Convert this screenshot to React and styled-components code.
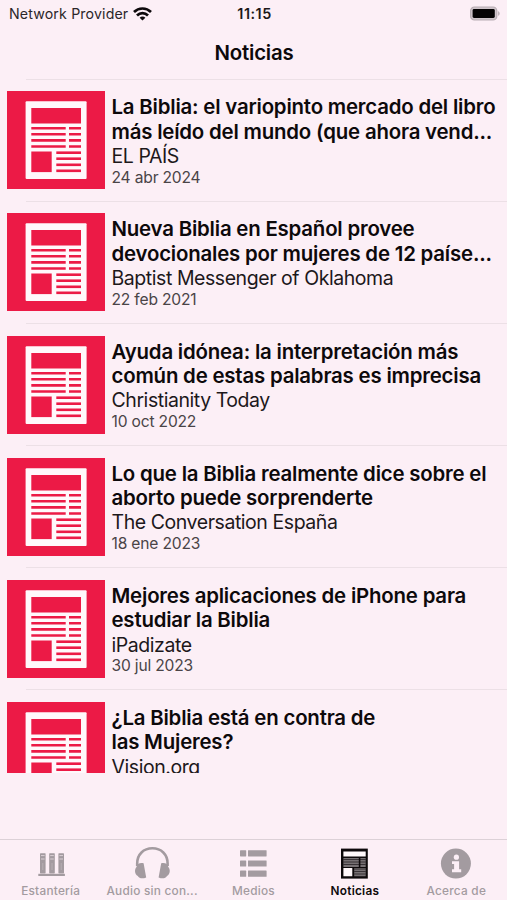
import React from 'react';
import styled, { createGlobalStyle } from 'styled-components';

const GlobalStyle = createGlobalStyle`
  * {
    box-sizing: border-box;
  }
  body {
    margin: 0;
    background-color: #fceff6;
    font-family: Inter, 'Liberation Sans', sans-serif;
    color: #0d090b;
  }
`;

const news = [
  {
    title: ['La Biblia: el variopinto mercado del libro', 'más leído del mundo (que ahora vend...'],
    source: 'EL PAÍS',
    date: '24 abr 2024',
  },
  {
    title: ['Nueva Biblia en Español provee', 'devocionales por mujeres de 12 paíse...'],
    source: 'Baptist Messenger of Oklahoma',
    date: '22 feb 2021',
  },
  {
    title: ['Ayuda idónea: la interpretación más', 'común de estas palabras es imprecisa'],
    source: 'Christianity Today',
    date: '10 oct 2022',
  },
  {
    title: ['Lo que la Biblia realmente dice sobre el', 'aborto puede sorprenderte'],
    source: 'The Conversation España',
    date: '18 ene 2023',
  },
  {
    title: ['Mejores aplicaciones de iPhone para', 'estudiar la Biblia'],
    source: 'iPadizate',
    date: '30 jul 2023',
  },
  {
    title: ['¿La Biblia está en contra de', 'las Mujeres?'],
    source: 'Vision.org',
    date: '',
  },
];

const Screen = styled.div`
  display: flex;
  flex-direction: column;
  width: 507px;
  height: 900px;
  overflow: hidden;
  background-color: #fceff6;
`;

const StatusBar = styled.div`
  display: grid;
  grid-template-columns: 1fr auto 1fr;
  align-items: center;
  height: 27px;
  padding: 0 7px 0 9px;
  flex-shrink: 0;
`;

const Carrier = styled.div`
  display: flex;
  align-items: center;
  gap: 5px;
  font-size: 14.2px;
  letter-spacing: 0.14px;
  color: #2b2629;
`;

const Clock = styled.div`
  font-size: 14.4px;
  font-weight: 600;
  letter-spacing: 0.5px;
  color: #1c181a;
`;

const Battery = styled.div`
  display: flex;
  justify-content: flex-end;
`;

const NavBar = styled.header`
  display: flex;
  align-items: center;
  justify-content: center;
  height: 52px;
  padding-left: 1px;
  flex-shrink: 0;
`;

const NavTitle = styled.h1`
  margin: 0;
  font-size: 20.4px;
  line-height: 24px;
  font-weight: 600;
  letter-spacing: -0.2px;
`;

const List = styled.main`
  height: 694px;
  overflow: hidden;
  flex-shrink: 0;
`;

const Row = styled.article`
  display: flex;
  gap: 6.5px;
  height: 122.1px;
  padding: 12.4px 0 0 7px;
  background: linear-gradient(#ece0e6, #ece0e6) 26px 0 / 100% 1px no-repeat;
`;

const Thumb = styled.svg`
  display: block;
  width: 98px;
  height: 98px;
  flex-shrink: 0;
`;

const RowText = styled.div`
  padding-top: 4px;
  white-space: nowrap;
`;

const Title = styled.h2`
  margin: 0;
  font-size: 20.4px;
  line-height: 24.4px;
  font-weight: 600;
  letter-spacing: -0.19px;

  span {
    display: block;
  }
`;

const Source = styled.p`
  margin: 0;
  font-size: 19.5px;
  line-height: 24.4px;
  letter-spacing: -0.44px;
  color: #1d181b;
`;

const PostDate = styled.p`
  margin: 0;
  font-size: 15.6px;
  line-height: 18px;
  letter-spacing: -0.18px;
  color: #4a4447;
`;

const TabBar = styled.nav`
  display: grid;
  grid-template-columns: repeat(5, 1fr);
  height: 61px;
  margin-top: auto;
  border-top: 1px solid #dcd1d7;
  flex-shrink: 0;
`;

const Tab = styled.div`
  display: flex;
  flex-direction: column;
  align-items: center;
  padding-top: 1px;
  color: ${({ $active }) => ($active ? '#0d090b' : '#a39ba0')};

  svg {
    display: block;
    width: 40px;
    height: 42px;
  }
`;

const TabLabel = styled.span`
  margin-top: 1px;
  font-size: 11.8px;
  line-height: 15px;
  font-weight: ${({ $active }) => ($active ? 600 : 500)};
  letter-spacing: 0.25px;
  white-space: nowrap;
`;

const WifiIcon = () => (
  <svg width='19' height='14' viewBox='0 0 19 14'>
    <g fill='none' stroke='#0d090b' strokeWidth='2.7'>
      <path d='M1 5C5.8 0.3 13.2 0.3 18 5' />
      <path d='M4 8.5C7.2 5.3 11.8 5.3 15 8.5' />
    </g>
    <path d='M9.5 13.6L6.6 10.7C8.2 9.2 10.8 9.2 12.4 10.7Z' fill='#0d090b' />
  </svg>
);

const BatteryIcon = () => (
  <svg width='31' height='15' viewBox='0 0 31 15'>
    <rect x='1.6' y='1' width='26.2' height='13' rx='3.8' fill='#d0c5cb' stroke='#b8adb3' strokeWidth='1.2' />
    <rect x='3.6' y='3' width='22.2' height='9' rx='1.4' fill='#050304' />
    <path d='M29.1 5.2C31.1 5.8 31.1 9.2 29.1 9.8Z' fill='#b8adb3' />
  </svg>
);

const NewsThumb = () => (
  <Thumb viewBox='0 0 98 98'>
    <path fill='#ec1a46' d='M0 0h98v98H0z' />
    <rect x='18.6' y='10.2' width='61' height='77.8' rx='1' fill='#fff8fb' />
    <g fill='#ec1a46'>
      <path d='M24.3 17h49.7v15.5H24.3z' />
      {[36, 42, 48.1, 54.2].map((y) => (
        <path key={y} d={`M24.3 ${y}h34.4v2.6H24.3zM62 ${y}h12v2.6H62z`} />
      ))}
      <path d='M24.3 60.5h20.4v20.6H24.3z' />
      {[60.4, 66.4, 72.5, 78.5].map((y) => (
        <path key={y} d={`M49.3 ${y}H74v2.6H49.3z`} />
      ))}
    </g>
  </Thumb>
);

const BooksIcon = () => (
  <svg viewBox='0 0 40 42' fill='currentColor'>
    <path d='M7.3 32.8h26.6v2.2H7.3z' />
    {[9, 18.2, 27.4].map((x) => (
      <g key={x}>
        <rect x={x} y='12.2' width='5.6' height='20.2' rx='0.6' />
        <path d={`M${x + 1} 14.6h3.6M${x + 1} 18h3.6`} stroke='#e2d7dd' strokeWidth='0.9' />
        <path d={`M${x + 2.8} 22v7`} stroke='#bdb4b9' strokeWidth='0.8' />
      </g>
    ))}
  </svg>
);

const HeadphonesIcon = () => (
  <svg viewBox='0 0 40 42' fill='currentColor'>
    <path d='M5.2 25V22.5C5.2 13.3 11.6 7.3 20.4 7.3S35.6 13.3 35.6 22.5V25' fill='none' stroke='currentColor' strokeWidth='2.6' />
    <path d='M11.6 22.3L14.2 36.4C10.4 38 7.2 37.4 5.8 34.9C2.6 33 2.2 28.4 4.5 25.9C4.8 22.9 8.1 21.3 11.6 22.3Z' />
    <path d='M29.2 22.3L26.6 36.4C30.4 38 33.6 37.4 35 34.9C38.2 33 38.6 28.4 36.3 25.9C36 22.9 32.7 21.3 29.2 22.3Z' />
  </svg>
);

const ListIcon = () => (
  <svg viewBox='0 0 40 42' fill='currentColor'>
    {[9.2, 19.4, 29.6].map((y) => (
      <g key={y}>
        <rect x='7' y={y} width='6.2' height='6.2' rx='0.6' />
        <rect x='15' y={y} width='18.6' height='6.2' rx='0.4' />
      </g>
    ))}
  </svg>
);

const NewsIcon = () => (
  <svg viewBox='0 0 40 42'>
    <path fill='#0d090b' d='M6 7.6h26.8v30H6z' />
    <path fill='#fff8fb' d='M8.4 10.4h22.3v5.2H8.4zM8.4 27h8.9v8.2H8.4z' />
    <path fill='#777174' d='M8.4 17h22.3v9H8.4zM19.2 27h11.5v8.2H19.2z' />
    <path
      stroke='#0d090b'
      d='M8.4 18.5h22.3M8.4 21h22.3M8.4 23.5h22.3M19.2 28h11.5M19.2 30.5h11.5M19.2 33h11.5'
      strokeWidth='0.6'
    />
    <path stroke='#0d090b' d='M24.6 17v9' strokeWidth='1.6' />
  </svg>
);

const InfoIcon = () => (
  <svg viewBox='0 0 40 42'>
    <circle cx='19.9' cy='22.6' r='15' fill='currentColor' />
    <circle cx='20.4' cy='16.2' r='2.6' fill='#fceff6' />
    <path fill='#fceff6' d='M16 20.2h7.1v8.1h2.1v2.9H16v-2.9h2.1v-5.2H16z' />
  </svg>
);

const tabs = [
  { label: 'Estantería', Icon: BooksIcon },
  { label: 'Audio sin con...', Icon: HeadphonesIcon },
  { label: 'Medios', Icon: ListIcon },
  { label: 'Noticias', Icon: NewsIcon, active: true },
  { label: 'Acerca de', Icon: InfoIcon },
];

const App = () => {
  return (
    <>
      <GlobalStyle />
      <Screen>
        <StatusBar>
          <Carrier>
            Network Provider
            <WifiIcon />
          </Carrier>
          <Clock>11:15</Clock>
          <Battery>
            <BatteryIcon />
          </Battery>
        </StatusBar>
        <NavBar>
          <NavTitle>Noticias</NavTitle>
        </NavBar>
        <List>
          {news.map(({ title, source, date }) => (
            <Row key={source}>
              <NewsThumb />
              <RowText>
                <Title>
                  {title.map((line) => (
                    <span key={line}>{line}</span>
                  ))}
                </Title>
                <Source>{source}</Source>
                <PostDate>{date}</PostDate>
              </RowText>
            </Row>
          ))}
        </List>
        <TabBar>
          {tabs.map(({ label, Icon, active }) => (
            <Tab
              key={label}
              $active={active}>
              <Icon />
              <TabLabel $active={active}>{label}</TabLabel>
            </Tab>
          ))}
        </TabBar>
      </Screen>
    </>
  );
};

export default App;
